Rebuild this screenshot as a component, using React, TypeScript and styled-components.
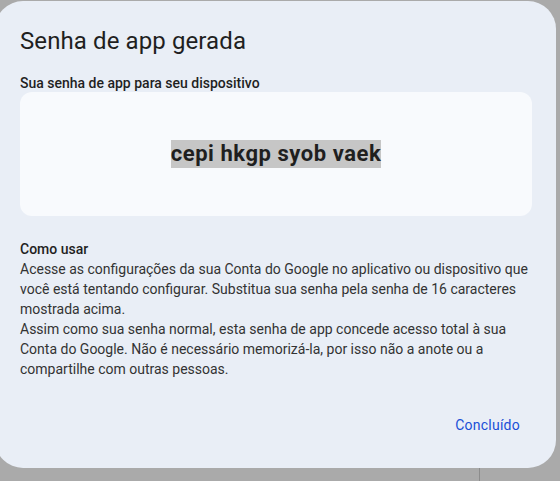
import React from "react";
import styled, { createGlobalStyle } from "styled-components";

const Global = createGlobalStyle`
  html, body { margin: 0; padding: 0; }
  body {
    background: #aaaaaa;
    font-family: Roboto, "Noto Sans", Arial, sans-serif;
    width: 560px;
    height: 481px;
    overflow: hidden;
    position: relative;
  }
`;

const Dialog = styled.div`
  box-sizing: border-box;
  margin: 1px 0 0 -5px;
  width: 561px;
  height: 467px;
  background: #e9eef6;
  border-radius: 28px;
  padding: 24px 24px 0 25px;
  display: flex;
  flex-direction: column;
`;

const Title = styled.h1`
  margin: 0;
  font-size: 24px;
  line-height: 32px;
  font-weight: 400;
  color: #1f1f1f;
  letter-spacing: 0.1px;
`;

const Label = styled.div`
  margin-top: 16px;
  font-size: 14px;
  line-height: 20px;
  font-weight: 500;
  color: #1f1f1f;
`;

const PasswordBox = styled.div`
  margin-top: -1px;
  height: 124px;
  background: #f8fafd;
  border-radius: 12px;
  display: flex;
  align-items: center;
  justify-content: center;
`;

const Password = styled.span`
  background: #c6c6c6;
  color: #1f1f1f;
  font-size: 22px;
  line-height: 28px;
  font-weight: 700;
  letter-spacing: 0.55px;
`;

const HowTo = styled.div`
  margin-top: 23px;
  font-size: 14px;
  line-height: 20px;
  color: #333333;
`;

const HowToTitle = styled.div`
  font-weight: 500;
  color: #1f1f1f;
`;

const Para = styled.p`
  margin: 0;
`;

const Actions = styled.div`
  margin-top: 26px;
  display: flex;
  justify-content: flex-end;
`;

const TextButton = styled.button`
  border: none;
  background: transparent;
  font-family: inherit;
  font-size: 14px;
  font-weight: 400;
  line-height: 20px;
  letter-spacing: 0.25px;
  color: #1a4fd6;
  padding: 10px 12px;
  cursor: pointer;
`;

const BackdropLine = styled.div`
  position: absolute;
  left: 479px;
  top: 468px;
  width: 1px;
  height: 13px;
  background: #8c8c8c;
`;

export default function App() {
  return (
    <>
      <Global />
      <Dialog>
        <Title>Senha de app gerada</Title>
        <Label>Sua senha de app para seu dispositivo</Label>
        <PasswordBox>
          <Password>cepi hkgp syob vaek</Password>
        </PasswordBox>
        <HowTo>
          <HowToTitle>Como usar</HowToTitle>
          <Para>
            Acesse as configurações da sua Conta do Google no aplicativo ou dispositivo que
            você está tentando configurar. Substitua sua senha pela senha de 16 caracteres
            mostrada acima.
          </Para>
          <Para>
            Assim como sua senha normal, esta senha de app concede acesso total à sua
            Conta do Google. Não é necessário memorizá-la, por isso não a anote ou a
            compartilhe com outras pessoas.
          </Para>
        </HowTo>
        <Actions>
          <TextButton>Concluído</TextButton>
        </Actions>
      </Dialog>
      <BackdropLine />
    </>
  );
}
